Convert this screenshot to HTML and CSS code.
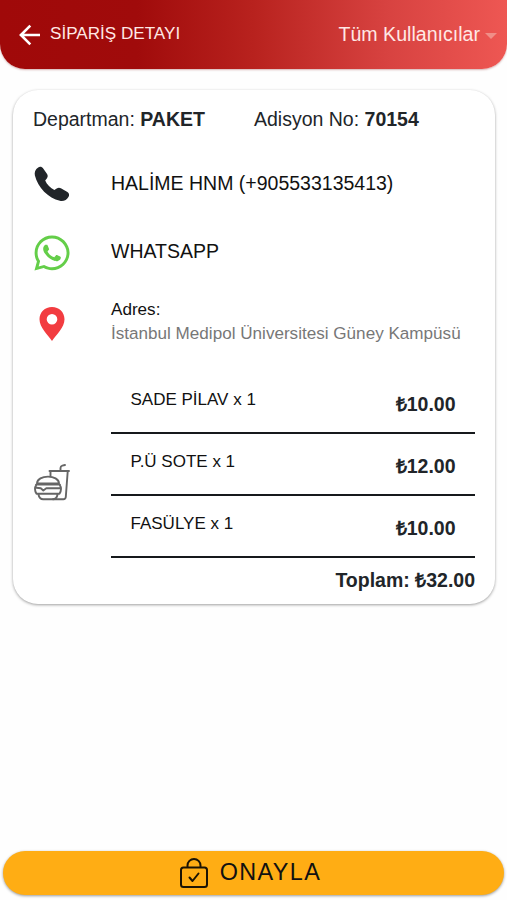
FILE: index.html
```html
<!DOCTYPE html>
<html lang="tr">
<head>
<meta charset="utf-8">
<title>Sipariş Detayı</title>
<link rel="stylesheet" href="styles.css">
</head>
<body>
<div class="screen">
  <header class="topbar">
    <svg class="back" viewBox="0 0 22 22"><path d="M21 11H2M11.3 1.6 1.9 11l9.4 9.4"/></svg>
    <h1 class="title">SİPARİŞ DETAYI</h1>
    <div class="filter">Tüm Kullanıcılar<svg class="caret" viewBox="0 0 12 6"><path d="M0 0h12L6 6z"/></svg></div>
  </header>

  <main class="card">
    <div class="meta">
      <div class="department">Departman: <b>PAKET</b></div>
      <div>Adisyon No: <b>70154</b></div>
    </div>
    <div class="row contact">
      <svg class="icon" viewBox="0 0 36 36"><path fill="#212529" d="M4.200 1.400C6 .3 8.100.8 9.200 2.600l3.700 5.200c1.200 1.700 1 3.300-.1 4.700l-1.600 2.100c1.700 4 5.300 7.600 9.200 9.500l2.300-1.500c1.300-1 2.800-1.100 4.200-.3l6.500 3.600c1.800 1.100 2.200 3 1.200 4.800-1.700 3.300-5.200 4.900-8.700 4.100C14.500 32.400 3.600 21.400.9 9.600.2 6.200 1.300 3.200 4.200 1.400z"/></svg>
      <span>HALİME HNM (+905533135413)</span>
    </div>
    <div class="row whatsapp">
      <svg class="icon" viewBox="-6 -6 460 460"><path fill="#64ce49" d="M380.900 65.100C339 23.100 283.200 0 223.900 0 101.500 0 1.900 99.600 1.900 222c0 39.100 10.200 77.300 29.600 111L0 448l117.700-30.900c32.400 17.700 68.900 27 106.100 27h.1c122.300 0 224.100-99.600 224.100-222 0-59.300-25.200-115-67.100-157zM223.900 406.700c-33.200 0-65.700-8.900-94-25.700l-6.700-4-69.800 18.300L72 327.200l-4.400-7c-18.500-29.400-28.200-63.300-28.200-98.200 0-101.700 82.800-184.500 184.600-184.500 49.300 0 95.600 19.200 130.400 54.100s56.200 81.200 56.100 130.500c0 101.800-84.900 184.600-186.600 184.600z"/><path fill="#64ce49" d="M325.100 268.500c-5.500-2.800-32.800-16.200-37.900-18-5.100-1.900-8.800-2.800-12.500 2.800s-14.300 18-17.600 21.800c-3.200 3.700-6.500 4.200-12 1.400-32.600-16.300-54-29.100-75.500-66-5.700-9.800 5.700-9.100 16.300-30.300 1.800-3.700.9-6.900-.5-9.700s-12.500-30.100-17.100-41.200c-4.500-10.800-9.100-9.300-12.500-9.500-3.200-.2-6.900-.2-10.600-.2s-9.700 1.400-14.800 6.900c-5.100 5.600-19.400 19-19.400 46.300s19.900 53.700 22.600 57.400c2.800 3.700 39.100 59.700 94.800 83.800 35.200 15.200 49 16.500 66.600 13.900 10.700-1.600 32.800-13.400 37.400-26.400s4.600-24.100 3.200-26.400c-1.300-2.500-5-3.900-10.500-6.600z"/></svg>
      <span>WHATSAPP</span>
    </div>
    <div class="row address">
      <svg class="icon" viewBox="0 0 36 36"><path fill="#f23c40" fill-rule="evenodd" d="M18 1C10.800 1 5.500 6.300 5.500 13.300 5.500 21.500 13.600 28.500 18 35c4.400-6.500 12.500-13.500 12.500-21.700C30.500 6.300 25.200 1 18 1zm0 7a5.300 5.300 0 1 1 0 10.600A5.300 5.300 0 0 1 18 8z"/></svg>
      <div class="place"><div>Adres:</div><div class="street">İstanbul Medipol Üniversitesi Güney Kampüsü</div></div>
    </div>
    <div class="row order">
      <svg class="icon food" viewBox="0 0 36 38"><g fill="none" stroke="#666" stroke-width="1.900" stroke-linejoin="round" stroke-linecap="round"><path d="M16.500 8v5M15.500 8H35M33.700 8.500 31.800 34q-.2 2.200-2.400 2.200H19M26.500 7.500V5q0-1.800 1.800-2.300L31 2"/><path d="M3 20.500C3 11.300 25 11.300 25 20.500zM2 21.600h24M2.500 24.800 6.800 25.300l2.500 2.200 3-2.200h13.200M2.500 21.500Q-.5 26 2.500 30.800h23q3-4.800 0-9.300M4.500 31.500q.8 4.700 4.700 4.700h9.600q4 0 4.700-4.700"/></g></svg>
      <div class="items">
        <div class="item"><span>SADE PİLAV x 1</span><b>₺10.00</b></div>
        <div class="item"><span>P.Ü SOTE x 1</span><b>₺12.00</b></div>
        <div class="item"><span>FASÜLYE x 1</span><b>₺10.00</b></div>
      </div>
    </div>
    <div class="total">Toplam: ₺32.00</div>
  </main>

  <button class="confirm">
    <svg class="bag" viewBox="0 0 28 30"><rect x="1" y="9.500" width="26" height="19.500" rx="2.500"/><path d="M7.500 9V7.500a6.500 6.500 0 0 1 13 0V9M9.500 19.500l3 3.500 6-7.500"/></svg>
    ONAYLA
  </button>
</div>
</body>
</html>
```
FILE: styles.css
```css
* { box-sizing: border-box; }
body {
  margin: 0;
  background: #fefefe;
  color: #212529;
  font: 19.5px/24px "Liberation Sans", Arial, sans-serif;
}
.screen {
  height: 900px;
  display: flex;
  flex-direction: column;
}
.topbar {
  height: 69px;
  flex: none;
  display: flex;
  align-items: center;
  padding: 0 10px 0 19px;
  border-radius: 0 0 25px 25px;
  background: linear-gradient(90deg, #a00909 0%, #a00b0b 27%, #b8221e 50%, #d74240 76%, #ee5753 100%);
  box-shadow: 0 1px 2px rgba(120, 0, 0, .3);
  color: #ffe8e5;
}
.back {
  width: 22px;
  height: 22px;
  fill: none;
  stroke: #fff;
  stroke-width: 2.6;
}
.title {
  margin: 0 0 1px 9px;
  font-size: 17.1px;
  font-weight: 400;
}
.filter {
  margin: 0 0 2px auto;
  display: flex;
  align-items: center;
  font-size: 19.6px;
}
.caret {
  width: 12px;
  height: 6px;
  margin: 4px 0 0 5px;
  fill: #f08e87;
}
.card {
  height: 514px;
  flex: none;
  margin: 21px 12px 0 13px;
  padding: 17px 20px 0;
  border-radius: 25px;
  background: #fff;
  box-shadow: 0 1px 3px rgba(0, 0, 0, .38);
}
.meta {
  height: 24px;
  display: flex;
}
.department { width: 221px; }
.row {
  display: grid;
  grid-template-columns: 78px 1fr;
  align-items: center;
  color: #111;
}
.icon {
  width: 36px;
  height: 36px;
  margin: 2px 0 0 1px;
}
.contact { height: 68px; margin-top: 18px; }
.whatsapp { height: 68px; }
.whatsapp .icon { margin-top: 3px; }
.address { height: 76px; }
.place {
  margin-bottom: 2px;
  font-size: 17.1px;
}
.street { color: #777; }
.order { height: 190px; margin-top: 9px; }
.food { height: 38px; margin-top: 34px; }
.item {
  display: flex;
  justify-content: space-between;
  height: 62.3px;
  padding: 16px 19.5px 0 19.5px;
  border-bottom: 2.4px solid #16191c;
  font-size: 17px;
}
.item b {
  margin-top: 4px;
  font-size: 19.5px;
  color: #212529;
}
.total {
  margin-top: 8px;
  text-align: right;
  font-weight: 700;
}
.confirm {
  height: 44px;
  flex: none;
  display: flex;
  justify-content: center;
  align-items: center;
  gap: 12px;
  margin: auto 3px 5px;
  padding: 0 6px 2px 0;
  border: 0;
  border-radius: 22px;
  background: #ffad14;
  box-shadow: 0 1px 3px rgba(0, 0, 0, .4);
  color: #111;
  font: 23.4px/28px "Liberation Sans", Arial, sans-serif;
  letter-spacing: 1.4px;
}
.bag {
  width: 28px;
  height: 30px;
  margin-top: 2px;
  fill: none;
  stroke: #1c1404;
  stroke-width: 2;
  stroke-linecap: round;
  stroke-linejoin: round;
}
```
